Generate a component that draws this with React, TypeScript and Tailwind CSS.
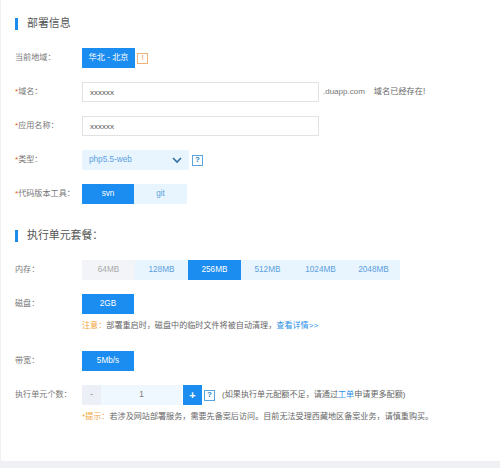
import React from "react";

const font = '"Liberation Sans", "Noto Sans CJK SC", sans-serif';
const memory = ["64MB", "128MB", "256MB", "512MB", "1024MB", "2048MB"];

function SectionTitle({ text }: { text: string }) {
  return (
    <div className="flex items-center h-[13px]">
      <span className="w-[3px] h-[12px] bg-[#1b8ceb]" />
      <span className="ml-[9px] text-[10.9px] text-[#555]">{text}</span>
    </div>
  );
}

function Label({ text, req }: { text: string; req?: boolean }) {
  return (
    <div className="w-[67px] shrink-0 pt-[1px] text-[8.1px] text-[#777] whitespace-nowrap">
      {req && <span className="text-[#e8590c]">*</span>}
      {text}
    </div>
  );
}

function Help() {
  return (
    <span className="flex items-center justify-center w-[11px] h-[11px] border border-[#5aa5e0] text-[8px] font-bold leading-none text-[#2b7fc4]">?</span>
  );
}

export default function App() {
  return (
    <div className="w-[500px] h-[468px] bg-[#eef0f4] pl-[1px] overflow-hidden" style={{ fontFamily: font }}>
      <div className="h-[461px] bg-white pl-[14px] pt-[17px]">
        <SectionTitle text="部署信息" />

        <div className="flex items-center mt-[18px] h-[20px]">
          <Label text={"当前地域\uFF1A"} />
          <div className="w-[53px] h-[20px] pt-[1px] bg-[#1b8cf0] text-white text-[8.2px] flex items-center justify-center">华北 - 北京</div>
          <span className="ml-[2px] flex items-center justify-center w-[11px] h-[11px] border border-[#f0b27a] text-[8px] leading-none text-[#e8893c]">!</span>
        </div>

        <div className="flex items-center mt-[14px] h-[20px]">
          <Label text={"域名\uFF1A"} req />
          <div className="w-[237px] h-[20px] pt-[1px] border border-[#e2e2e2] pl-[7px] flex items-center text-[8px] text-[#555]">xxxxxx</div>
          <span className="ml-[4px] text-[8px] text-[#777]">.duapp.com</span>
          <span className="ml-[9px] text-[8.2px] text-[#666]">域名已经存在!</span>
        </div>

        <div className="flex items-center mt-[14px] h-[20px]">
          <Label text={"应用名称\uFF1A"} req />
          <div className="w-[237px] h-[20px] pt-[1px] border border-[#e2e2e2] pl-[7px] flex items-center text-[8px] text-[#555]">xxxxxx</div>
        </div>

        <div className="flex items-center mt-[14px] h-[20px]">
          <Label text={"类型\uFF1A"} req />
          <div className="w-[107px] h-[20px] bg-[#e9f5fe] pl-[7px] pr-[7px] flex items-center justify-between text-[8.2px] text-[#5b9fe0]">
            <span className="pt-[1px]">php5.5-web</span>
            <svg width="10" height="7" viewBox="0 0 10 7" fill="none" stroke="#2f6fa8" strokeWidth="1.6"><path d="M1 1l4 4 4-4" /></svg>
          </div>
          <span className="ml-[3px]"><Help /></span>
        </div>

        <div className="flex items-center mt-[14px] h-[20px]">
          <Label text={"代码版本工具\uFF1A"} req />
          <div className="w-[52px] h-[20px] pt-[1px] bg-[#1b8cf0] text-white text-[8.2px] flex items-center justify-center">svn</div>
          <div className="w-[53px] h-[20px] pt-[1px] bg-[#e9f5fe] text-[#5b9fe0] text-[8.2px] flex items-center justify-center">git</div>
        </div>

        <div className="mt-[25px]">
          <SectionTitle text={"执行单元套餐\uFF1A"} />
        </div>

        <div className="flex items-center mt-[18px] h-[20px]">
          <Label text={"内存\uFF1A"} />
          {memory.map(m => (
            <div
              key={m}
              className={`w-[53px] h-[20px] pt-[1px] text-[8.2px] flex items-center justify-center ${
                m === "256MB" ? "bg-[#1b8cf0] text-white" : m === "64MB" ? "bg-[#f2f4f8] text-[#aaa]" : "bg-[#e9f5fe] text-[#5b9fe0]"
              }`}
            >
              {m}
            </div>
          ))}
        </div>

        <div className="flex items-center mt-[14px] h-[20px]">
          <Label text={"磁盘\uFF1A"} />
          <div className="w-[52px] h-[20px] pt-[1px] bg-[#1b8cf0] text-white text-[8.2px] flex items-center justify-center">2GB</div>
        </div>
        <div className="ml-[67px] mt-[5px] pt-[1px] h-[14px] flex items-center text-[8.1px] text-[#666] whitespace-nowrap">
          <span className="text-[#f0a63c]">{"注意\uFF1A"}</span>
          <span>{"部署重启时\uFF0C磁盘中的临时文件将被自动清理\uFF0C"}</span>
          <span className="text-[#2a8fe6]">查看详情&gt;&gt;</span>
        </div>

        <div className="flex items-center mt-[18px] h-[20px]">
          <Label text={"带宽\uFF1A"} />
          <div className="w-[52px] h-[20px] pt-[1px] bg-[#1b8cf0] text-white text-[8.2px] flex items-center justify-center">5Mb/s</div>
        </div>

        <div className="flex items-center mt-[14px] h-[20px]">
          <Label text={"执行单元个数\uFF1A"} />
          <div className="w-[19px] h-[20px] bg-[#eceff6] text-[#888] text-[8.2px] flex items-center justify-center">-</div>
          <div className="w-[81px] h-[20px] pt-[1px] bg-[#eff8fe] text-[#777] text-[8.2px] flex items-center justify-center">1</div>
          <div className="ml-[1px] w-[19px] h-[20px] bg-[#1b8cf0] text-white text-[11px] font-bold flex items-center justify-center">+</div>
          <span className="ml-[2px]"><Help /></span>
          <span className="ml-[7px] text-[8.1px] text-[#666] whitespace-nowrap">
            {"(如果执行单元配额不足\uFF0C请通过"}<span className="text-[#2a8fe6]">工单</span>申请更多配额)
          </span>
        </div>
        <div className="ml-[67px] mt-[5px] h-[14px] flex items-center text-[8.1px] text-[#666] whitespace-nowrap">
          <span className="text-[#f0a63c]">{"*提示\uFF1A"}</span>
          <span>{"若涉及网站部署服务\uFF0C需要先备案后访问。目前无法受理西藏地区备案业务\uFF0C请慎重购买。"}</span>
        </div>
      </div>
    </div>
  );
}
